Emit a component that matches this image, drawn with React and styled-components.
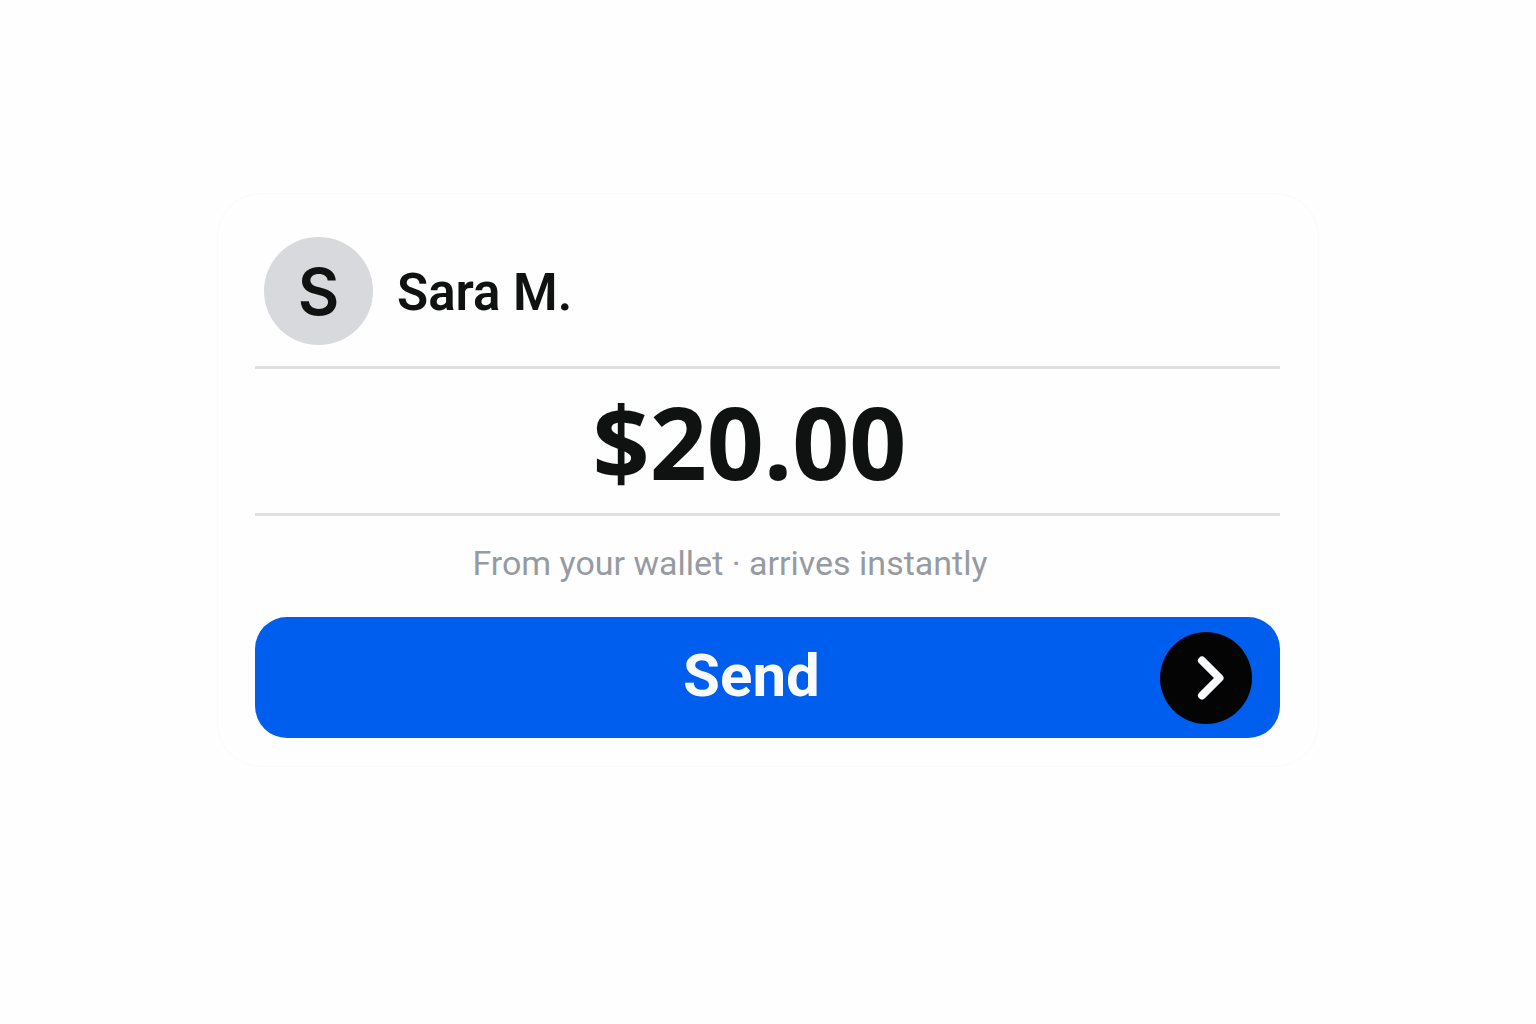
import React from 'react';
import styled, { createGlobalStyle } from 'styled-components';

const payment = {
    name: 'Sara M.',
    initial: 'S',
    amount: '$20.00',
    note: 'From your wallet · arrives instantly',
};

const App = () => {
    return (
        <>
            <GlobalStyle />
            <Page>
                <Card>
                    <Recipient>
                        <Avatar aria-hidden='true'>{payment.initial}</Avatar>
                        <Name>{payment.name}</Name>
                    </Recipient>
                    <Amount>{payment.amount}</Amount>
                    <Note>{payment.note}</Note>
                    <SendButton type='button'>
                        <SendLabel>Send</SendLabel>
                        <ArrowCircle>
                            <svg width='92' height='92' viewBox='0 0 92 92' fill='none' aria-hidden='true'>
                                <path
                                    d='M42 28.5L59.5 46L42 63.5'
                                    stroke='#fafbfd'
                                    strokeWidth='8'
                                    strokeLinecap='round'
                                    strokeLinejoin='round'
                                />
                            </svg>
                        </ArrowCircle>
                    </SendButton>
                </Card>
            </Page>
        </>
    )
}

export default App;

const GlobalStyle = createGlobalStyle`
    * {
        box-sizing: border-box;
    }
    body {
        margin: 0;
        background: #fefefe;
        color: #101212;
        font-family: Roboto, 'Liberation Sans', sans-serif;
    }
`
const Page = styled.main`
    min-height: 100vh;
    padding: 193px 24px 24px;
    display: flex;
    justify-content: center;
    align-items: flex-start;
`
const Card = styled.section`
    width: 100%;
    max-width: 1102px;
    padding: 43px 38px 28px 37px;
    display: flex;
    flex-direction: column;
    background: #fefefe;
    border: 1px solid #fafafa;
    border-radius: 44px;
`
const Recipient = styled.header`
    display: flex;
    align-items: center;
    gap: 24px;
    padding: 0 9px 21px;
    border-bottom: 3px solid #e1e1e4;
`
const Avatar = styled.div`
    width: 109px;
    height: 108px;
    flex-shrink: 0;
    display: flex;
    align-items: center;
    justify-content: center;
    border-radius: 50%;
    background: #d8d9dd;
    font-family: Inter, 'Liberation Sans', sans-serif;
    font-size: 64px;
    font-weight: 600;
`
const Name = styled.h1`
    margin: 0;
    padding-top: 4px;
    font-size: 51px;
    line-height: 64px;
    font-weight: 600;
`
const Amount = styled.p`
    margin: 0;
    padding: 12px 36px 12px 0;
    border-bottom: 3px solid #e1e1e4;
    font-family: 'Noto Sans', 'Liberation Sans', sans-serif;
    font-size: 100px;
    line-height: 120px;
    font-weight: 700;
    text-align: center;
`
const Note = styled.p`
    margin: 0;
    padding: 23px 75px 30px 0;
    font-size: 34px;
    line-height: 48px;
    color: #969ba2;
    text-align: center;
`
const SendButton = styled.button`
    width: 100%;
    min-height: 121px;
    padding: 0 28px;
    display: grid;
    grid-template-columns: 1fr auto 1fr;
    align-items: center;
    border: none;
    border-radius: 32px;
    background: #005eee;
    color: #fafbfd;
    font-family: inherit;
    cursor: pointer;
`
const SendLabel = styled.span`
    grid-column: 2;
    padding: 0 32px 4px 0;
    font-size: 60px;
    line-height: 72px;
    font-weight: 700;
`
const ArrowCircle = styled.span`
    width: 92px;
    height: 92px;
    justify-self: end;
    border-radius: 50%;
    background: #040404;

    svg {
        display: block;
    }
`
